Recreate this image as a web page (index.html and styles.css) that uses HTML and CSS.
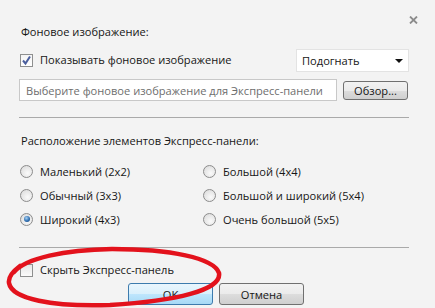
FILE: index.html
```html
<!DOCTYPE html>
<html lang="ru">
<head>
<meta charset="UTF-8"><meta name="viewport" content="width=device-width,initial-scale=1.0">
<title>Настройки Экспресс-панели</title>
<link rel="stylesheet" href="styles.css">
</head>
<body>
<div class="dlg">
  <div class="top">
    <svg class="close" width="9" height="8" viewBox="0 0 9 8"><path d="M1 0.5L8 7.5M8 0.5L1 7.5" stroke="#8c8c8c" stroke-width="1.8"/></svg>
  </div>

  <div class="title">Фоновое изображение:</div>

  <div class="row r-show">
    <label class="chk"><span class="box on"><svg width="11" height="11" viewBox="0 0 11 11"><path d="M2 5.5L4.5 8.5L9 1.5" fill="none" stroke="#4b5f9e" stroke-width="2"/></svg></span>Показывать фоновое изображение</label>
    <div class="select">Подогнать<span class="arrow"></span></div>
  </div>

  <div class="row r-file">
    <div class="input">Выберите фоновое изображение для Экспресс-панели</div>
    <button class="btn browse">Обзор...</button>
  </div>

  <div class="sep s1"></div>

  <div class="title t2">Расположение элементов Экспресс-панели:</div>

  <div class="grid">
    <label class="rad"><span class="dot"></span>Маленький (2x2)</label>
    <label class="rad"><span class="dot"></span>Большой (4x4)</label>
    <label class="rad"><span class="dot"></span>Обычный (3x3)</label>
    <label class="rad"><span class="dot"></span>Большой и широкий (5x4)</label>
    <label class="rad"><span class="dot on"></span>Широкий (4x3)</label>
    <label class="rad"><span class="dot"></span>Очень большой (5x5)</label>
  </div>

  <div class="sep s2"></div>

  <label class="chk r-hide"><span class="box"></span>Скрыть Экспресс-панель</label>

  <div class="btns">
    <button class="btn ok">OK</button>
    <button class="btn">Отмена</button>
  </div>

  <!-- hand drawn marker around the hide option -->
  <svg class="mark" width="435" height="308" viewBox="0 0 435 308"><path d="M14 272C26 258 64 250 112 249C170 249 214 258 219 273C222 290 176 301 110 305C52 307 12 299 9 283C8 277 12 272 20 266" fill="none" stroke="#e3121c" stroke-width="4.5" stroke-linecap="round"/></svg>
</div>
</body>
</html>
```

FILE: styles.css
```css
body{margin:0;font-family:'Open Sans','DejaVu Sans',sans-serif;font-size:11.1px;color:#161616;background:#f3f3f3}
.dlg{position:relative;width:435px;height:308px;box-sizing:border-box;padding:0 26px 0 19px;background:#f3f3f3;overflow:hidden}
.top{height:25px;display:flex;justify-content:flex-end;align-items:flex-end;margin-right:-9px}
.close{margin-bottom:1px}
.title{height:14px;line-height:14px;padding-left:2px}
.row{display:flex;align-items:center;height:22px}
.r-show{margin-top:10px}
.r-file{margin-top:8px;gap:6px}
.chk{display:flex;align-items:center;gap:7px;padding-left:1px;line-height:14px}
.box{width:11px;height:11px;border:1px solid #8e8f8f;background:linear-gradient(#e6e6e6,#fbfbfb);display:flex;align-items:center;justify-content:center}
.box.on{background:linear-gradient(#f4f4f4,#fff)}
.select{margin-left:auto;width:106px;height:21px;padding-left:5px;background:#fff;border:1px solid #e3e3e3;display:flex;align-items:center;position:relative}
.arrow{position:absolute;right:5px;top:9px;border-left:4px solid transparent;border-right:4px solid transparent;border-top:4px solid #111}
.input{width:310px;height:20px;border:1px solid #c8c8c8;background:#fff;color:#6e6e6e;padding-left:6px;display:flex;align-items:center;white-space:nowrap;overflow:hidden}
.btn{font:inherit;color:#161616;border:1px solid #707070;border-radius:3px;background:linear-gradient(#f2f2f2 0,#ebebeb 50%,#dddddd 51%,#cfcfcf 100%);padding:0;height:20px}
.browse{width:65px;height:19px;margin-top:1px}
.sep{height:1px;background:#a9a9a9}
.s1{margin-top:16px}
.t2{margin-top:16px}
.grid{margin-top:11px;display:grid;grid-template-columns:183px 1fr;grid-auto-rows:24px}
.rad{display:flex;align-items:center;gap:7px;padding-left:1px}
.dot{width:11px;height:11px;border-radius:50%;border:1px solid #8c8c8c;background:radial-gradient(circle at 60% 65%,#fafafa 0,#e2e2e2 70%,#cfcfcf 100%);display:flex;align-items:center;justify-content:center}
.dot.on::after{content:"";width:6px;height:6px;border-radius:50%;background:radial-gradient(circle at 40% 35%,#a9d3f5 0,#2f6fb1 55%,#123a6d 100%)}
.s2{margin-top:16px}
.r-hide{margin-top:15px;height:14px}
.btns{margin-top:6px;display:flex;justify-content:center;gap:6px;padding-left:4px}
.btns .btn{width:85px;height:22px}
.ok{border-color:#3d7bad;background:linear-gradient(#eaf6fd 0,#d9f0fc 50%,#bee6fd 51%,#a7d9f5 100%)}
.mark{position:absolute;left:0;top:0;pointer-events:none}
```
